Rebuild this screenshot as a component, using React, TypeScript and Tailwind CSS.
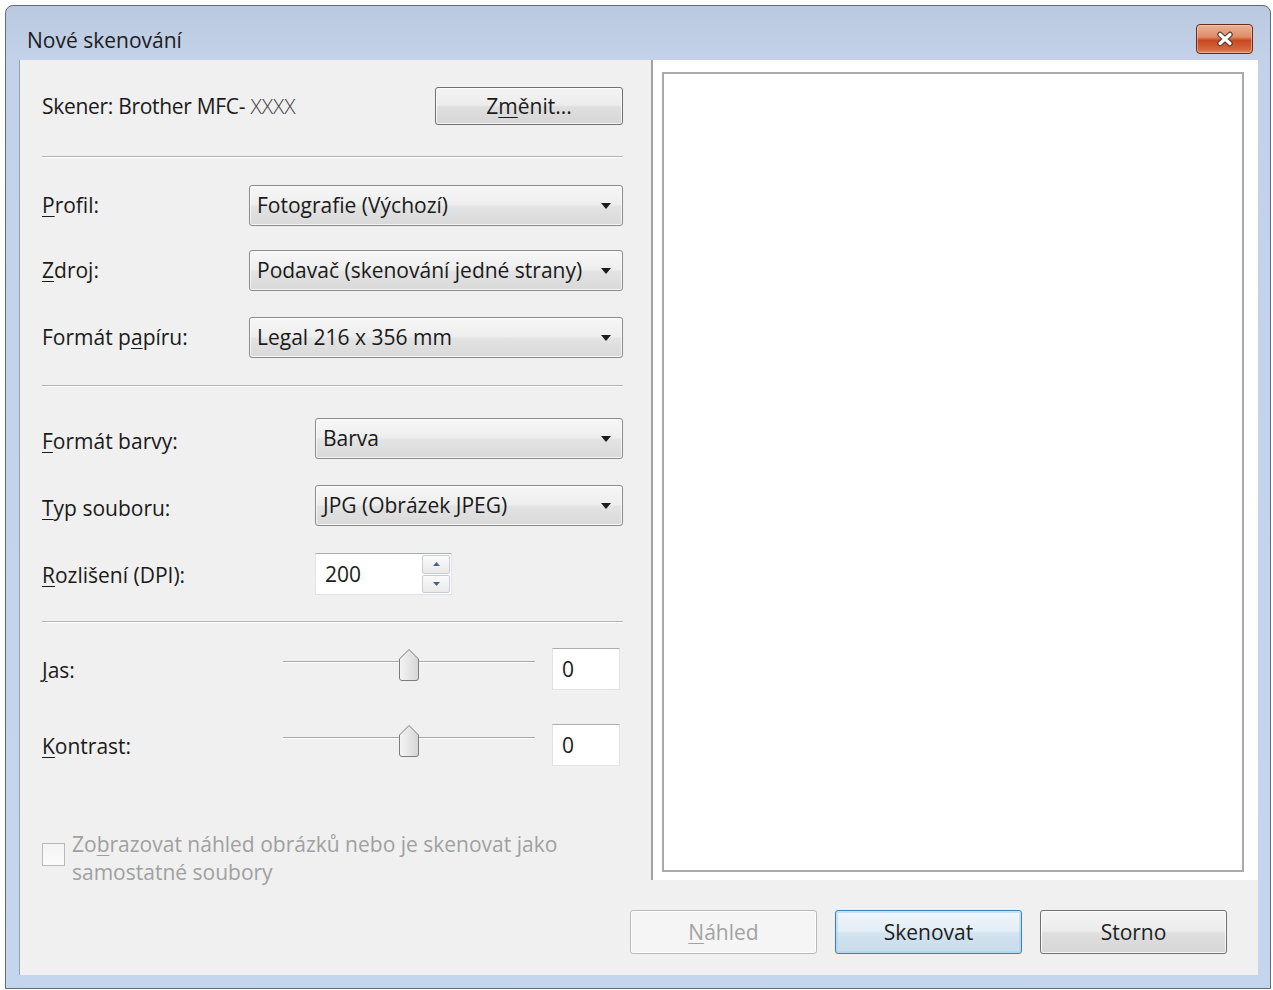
import React from "react";

const K = ({ children }: { children: React.ReactNode }) => (
  <span className="underline decoration-1 underline-offset-[3px]">{children}</span>
);

function Combo({ value }: { value: string }) {
  return (
    <div className="flex h-[41px] flex-1 items-center justify-between rounded-[3px] border border-[#8a8a8a] bg-[linear-gradient(to_bottom,#f7f7f7_0%,#eeeeee_47%,#e3e3e3_53%,#d9d9d9_100%)] pl-[7px] pr-[11px] shadow-[inset_0_0_0_1px_rgba(255,255,255,0.75)]">
      <span className="whitespace-nowrap">{value}</span>
      <svg width="10" height="6" viewBox="0 0 10 6">
        <path d="M0 0H10L5 6Z" fill="#1c1c1c" />
      </svg>
    </div>
  );
}

function Separator({ className }: { className: string }) {
  return <div className={`h-[2px] border-t border-[#b4b4b4] border-b border-b-white ${className}`} />;
}

function Thumb() {
  return (
    <svg width="22" height="34" viewBox="0 0 22 34" className="absolute left-1/2 top-[-13px] -translate-x-1/2">
      <defs>
        <linearGradient id="tg" x1="0" y1="0" x2="1" y2="0">
          <stop offset="0" stopColor="#f4f4f4" />
          <stop offset="0.5" stopColor="#e6e6e6" />
          <stop offset="1" stopColor="#d4d4d4" />
        </linearGradient>
      </defs>
      <path d="M1.5 11 L11 1.5 L20.5 11 V30 Q20.5 32.5 18 32.5 H4 Q1.5 32.5 1.5 30 Z" fill="url(#tg)" stroke="#7c7c7c" strokeWidth="1" />
    </svg>
  );
}

function SliderRow({ label, className }: { label: React.ReactNode; className: string }) {
  return (
    <div className={`flex h-[42px] items-center ${className}`}>
      <div className="w-[241px] pt-[3px]">{label}</div>
      <div className="relative h-full w-[252px]">
        <div className="absolute left-0 right-0 top-[13px] h-[2px] border-t border-[#a9a9a9] border-b border-b-white" />
        <div className="relative top-[13px] h-0">
          <Thumb />
        </div>
      </div>
      <div className="ml-[17px] flex h-[42px] w-[68px] items-center border border-[#e2e3ea] border-t-[#abadb3] bg-white pl-[9px]">
        0
      </div>
    </div>
  );
}

function Button({ children, variant = "normal" }: { children: React.ReactNode; variant?: "normal" | "default" | "disabled" }) {
  const styles = {
    normal:
      "border-[#707070] text-[#1e1e1e] bg-[linear-gradient(to_bottom,#f4f4f4_0%,#ececec_47%,#dfdfdf_53%,#d6d6d6_100%)] shadow-[inset_0_0_0_1px_rgba(255,255,255,0.8)]",
    default:
      "border-[#3c7fb1] text-[#1e1e1e] bg-[linear-gradient(to_bottom,#f1f7fb_0%,#e3eef6_47%,#d3e4f0_53%,#c8dbe9_100%)] shadow-[inset_0_0_0_2px_rgba(164,214,245,0.55)]",
    disabled: "border-[#b6b9bb] text-[#a3a3a3] bg-[#f5f5f5] shadow-[inset_0_0_0_1px_rgba(255,255,255,0.8)]",
  }[variant];
  return (
    <div className={`flex h-[44px] w-[187px] items-center justify-center rounded-[3px] border ${styles}`}>
      {children}
    </div>
  );
}

function CloseButton() {
  return (
    <div className="mt-[18px] flex h-[30px] w-[57px] items-center justify-center rounded-[4px] border border-[#6b2b1c] bg-[linear-gradient(to_bottom,#eab196_0%,#df8d6a_42%,#c9471f_55%,#d3653a_85%,#e0895f_100%)] shadow-[inset_0_0_0_1px_rgba(255,210,190,0.5)]">
      <svg width="20" height="16" viewBox="0 0 20 16">
        <path d="M5 3.5 L15 12.5 M15 3.5 L5 12.5" stroke="#5a3a30" strokeWidth="5.5" strokeLinecap="round" />
        <path d="M5 3.5 L15 12.5 M15 3.5 L5 12.5" stroke="#ffffff" strokeWidth="3.2" strokeLinecap="round" />
      </svg>
    </div>
  );
}

export default function App() {
  return (
    <div className="min-h-screen bg-white pl-[5px] pt-[5px] font-['Segoe_UI','Open_Sans','Noto_Sans',sans-serif] text-[21px] leading-none text-[#1a1a1a]">
      <div className="flex h-[984px] w-[1266px] flex-col rounded-t-[8px] border border-[#5d6b7c] bg-[linear-gradient(to_bottom,#bac9e0_0px,#c3d2e9_54px,#c4d5ee_100%)]">
        {/* title bar */}
        <div className="flex h-[54px] items-start justify-between pl-[21px] pr-[17px]">
          <div className="pt-[24px] text-[#1c1c1c]">Nové skenování</div>
          <CloseButton />
        </div>

        {/* client area */}
        <div className="ml-[13px] flex h-[915px] w-[1239px] flex-col border-l border-[#8ea2c0] bg-[#f0f0f0]">
          <div className="flex h-[820px]">
            {/* left form */}
            <div className="flex w-[631px] flex-col pl-[22px] pr-[28px]">
              <div className="mt-[27px] flex h-[38px] items-center justify-between">
                <span className="whitespace-nowrap tracking-[-0.3px]">
                  Skener: Brother MFC- <span className="font-light tracking-[0px] text-[#444]">XXXX</span>
                </span>
                <div className="flex h-[38px] w-[188px] items-center justify-center rounded-[3px] border border-[#707070] bg-[linear-gradient(to_bottom,#f4f4f4_0%,#ececec_47%,#dfdfdf_53%,#d6d6d6_100%)] shadow-[inset_0_0_0_1px_rgba(255,255,255,0.8)]">
                  Z<K>m</K>ěnit...
                </div>
              </div>

              <Separator className="mt-[31px]" />

              <div className="mt-[27px] flex items-center">
                <div className="w-[207px]">
                  <K>P</K>rofil:
                </div>
                <Combo value="Fotografie (Výchozí)" />
              </div>
              <div className="mt-[24px] flex items-center">
                <div className="w-[207px]">
                  <K>Z</K>droj:
                </div>
                <Combo value="Podavač (skenování jedné strany)" />
              </div>
              <div className="mt-[26px] flex items-center">
                <div className="w-[207px]">
                  Formát p<K>a</K>píru:
                </div>
                <Combo value="Legal 216 x 356 mm" />
              </div>

              <Separator className="mt-[27px]" />

              <div className="mt-[31px] flex items-center">
                <div className="w-[273px] pt-[6px]">
                  <K>F</K>ormát barvy:
                </div>
                <Combo value="Barva" />
              </div>
              <div className="mt-[26px] flex items-center">
                <div className="w-[273px] pt-[6px]">
                  <K>T</K>yp souboru:
                </div>
                <Combo value="JPG (Obrázek JPEG)" />
              </div>
              <div className="mt-[27px] flex items-center">
                <div className="w-[273px] pt-[3px]">
                  <K>R</K>ozlišení (DPI):
                </div>
                <div className="flex h-[42px] w-[137px] border border-[#e2e3ea] border-t-[#abadb3] bg-white">
                  <div className="flex flex-1 items-center pl-[9px]">200</div>
                  <div className="flex w-[30px] flex-col gap-[1px] p-[1px]">
                    <div className="flex flex-1 items-center justify-center rounded-[2px] border border-[#c9cdd3] bg-[linear-gradient(to_bottom,#fbfbfb,#eaeaea)]">
                      <svg width="7" height="4" viewBox="0 0 7 4">
                        <path d="M0 4H7L3.5 0Z" fill="#4d6185" />
                      </svg>
                    </div>
                    <div className="flex flex-1 items-center justify-center rounded-[2px] border border-[#c9cdd3] bg-[linear-gradient(to_bottom,#fbfbfb,#eaeaea)]">
                      <svg width="7" height="4" viewBox="0 0 7 4">
                        <path d="M0 0H7L3.5 4Z" fill="#4d6185" />
                      </svg>
                    </div>
                  </div>
                </div>
              </div>

              <Separator className="mt-[26px]" />

              <SliderRow label={<><K>J</K>as:</>} className="mt-[25px]" />
              <SliderRow label={<><K>K</K>ontrast:</>} className="mt-[34px]" />

              <div className="mt-[64px] flex items-start text-[#a0a0a0]">
                <div className="mt-[13px] h-[23px] w-[23px] shrink-0 border border-[#b9b9b9] bg-[linear-gradient(to_bottom,#f4f4f4,#fbfbfb)]" />
                <div className="ml-[7px] leading-[28px]">
                  Zo<K>b</K>razovat náhled obrázků nebo je skenovat jako
                  <br />
                  samostatné soubory
                </div>
              </div>
            </div>

            {/* preview */}
            <div className="flex w-[607px] border-l-2 border-[#a3a3a3] bg-white pb-[8px] pl-[9px] pr-[14px] pt-[12px]">
              <div className="flex-1 border-2 border-[#aaaaaa] bg-white" />
            </div>
          </div>

          {/* buttons */}
          <div className="flex flex-1 items-start justify-end gap-[18px] pr-[31px] pt-[30px]">
            <Button variant="disabled">
              <K>N</K>áhled
            </Button>
            <Button variant="default">Skenovat</Button>
            <Button>Storno</Button>
          </div>
        </div>
      </div>
    </div>
  );
}
